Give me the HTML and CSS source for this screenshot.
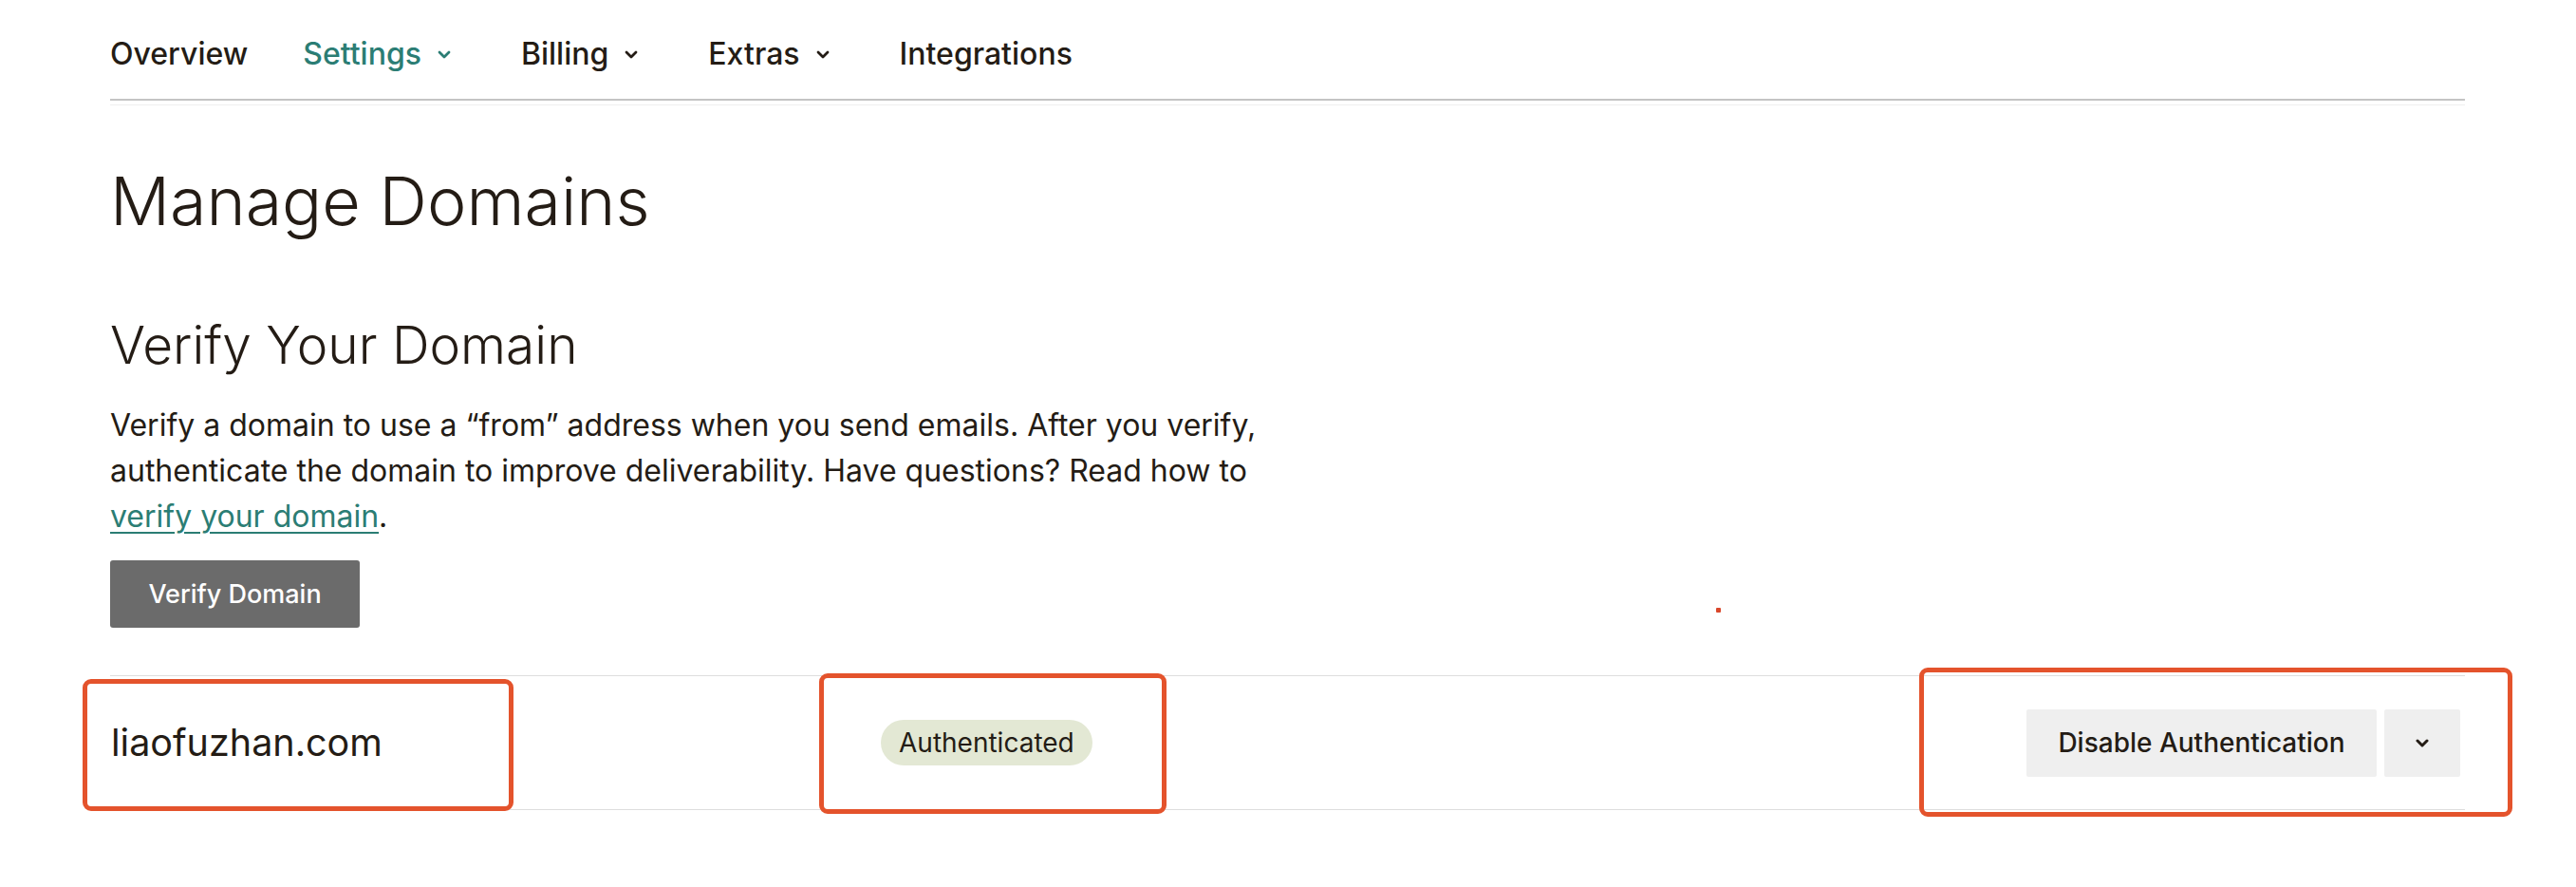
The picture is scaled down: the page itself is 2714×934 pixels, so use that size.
FILE: index.html
```html
<!DOCTYPE html>
<html lang="en">
<head>
<meta charset="utf-8">
<title>Manage Domains</title>
<link rel="stylesheet" href="styles.css">
</head>
<body>
<div class="page">
  <nav class="nav">
    <a class="nav-item">Overview</a>
    <a class="nav-item active">Settings<svg class="chev" viewBox="0 0 14 9" width="14" height="9"><path d="M2 2 L7 7 L12 2" fill="none" stroke="currentColor" stroke-width="2.8" stroke-linecap="round" stroke-linejoin="round"/></svg></a>
    <a class="nav-item">Billing<svg class="chev" viewBox="0 0 14 9" width="14" height="9"><path d="M2 2 L7 7 L12 2" fill="none" stroke="currentColor" stroke-width="2.8" stroke-linecap="round" stroke-linejoin="round"/></svg></a>
    <a class="nav-item">Extras<svg class="chev" viewBox="0 0 14 9" width="14" height="9"><path d="M2 2 L7 7 L12 2" fill="none" stroke="currentColor" stroke-width="2.8" stroke-linecap="round" stroke-linejoin="round"/></svg></a>
    <a class="nav-item">Integrations</a>
  </nav>
  <div class="nav-soft"></div>

  <h1 class="title">Manage Domains</h1>
  <h2 class="subtitle">Verify Your Domain</h2>
  <p class="intro">Verify a domain to use a “from” address when you send emails. After you verify, authenticate the domain to improve deliverability. Have questions? Read how to <a class="link">verify your domain</a>.</p>
  <button class="btn-primary">Verify Domain</button>

  <div class="domain-row">
    <div class="cell-domain">liaofuzhan.com</div>
    <div class="cell-status"><span class="badge">Authenticated</span></div>
    <div class="cell-actions">
      <button class="btn-secondary">Disable Authentication</button>
      <button class="btn-secondary btn-chev"><svg viewBox="0 0 14 9" width="14" height="9"><path d="M2 2 L7 7 L12 2" fill="none" stroke="currentColor" stroke-width="3" stroke-linecap="round" stroke-linejoin="round"/></svg></button>
    </div>
    <span class="mark mark-domain"></span>
    <span class="mark mark-status"></span>
    <span class="mark mark-actions"></span>
    <span class="dot"></span>
  </div>
</div>
</body>
</html>
```

FILE: styles.css
```css
html, body {
  margin: 0;
  padding: 0;
  background: #ffffff;
}

body {
  font-family: "Inter", "Liberation Sans", sans-serif;
  color: #241c15;
  min-height: 934px;
}

.page {
  margin-left: 116px;
  width: 2481px;
  padding-bottom: 60px;
}

.nav {
  display: flex;
  align-items: center;
  padding-top: 38px;
  padding-bottom: 28px;
  border-bottom: 2px solid #c4c4c4;
}

.nav-item {
  display: flex;
  align-items: center;
  font-size: 32px;
  line-height: 38px;
  font-weight: 500;
  color: #241c15;
  margin-right: 58px;
}

.nav-item.active {
  color: #2b7d74;
}

.chev {
  margin-left: 17px;
  margin-right: 16px;
}

.nav-soft {
  height: 1px;
  margin-top: 4px;
  background: #efefef;
}

.title {
  margin: 59px 0 0 0;
  font-size: 70px;
  line-height: 84px;
  font-weight: 300;
}

.subtitle {
  margin: 75px 0 0 0;
  font-size: 55px;
  line-height: 68px;
  font-weight: 300;
}

.intro {
  margin: 27px 0 0 0;
  width: 1240px;
  font-size: 32px;
  line-height: 48px;
  font-weight: 400;
}

.link {
  color: #2b7d74;
  text-decoration: underline;
  text-underline-offset: 5px;
  text-decoration-thickness: 2px;
}

.btn-primary {
  display: block;
  margin-top: 22px;
  height: 71px;
  width: 263px;
  border: none;
  border-radius: 3px;
  background: #6b6b6b;
  color: #ffffff;
  font-family: inherit;
  font-size: 27px;
  font-weight: 500;
  padding: 0;
}

.domain-row {
  position: relative;
  display: flex;
  align-items: center;
  margin-top: 50px;
  height: 140px;
  border-top: 1px solid #dedede;
  border-bottom: 1px solid #dedede;
  padding-right: 5px;
}

.cell-domain {
  width: 812px;
  font-size: 39.5px;
  font-weight: 400;
  padding-left: 1px;
  box-sizing: border-box;
}

.badge {
  display: inline-flex;
  align-items: center;
  height: 48px;
  padding: 0 19px;
  border-radius: 24px;
  background: #e3e8d4;
  font-size: 28px;
  color: #241c15;
}

.cell-actions {
  margin-left: auto;
  display: flex;
  gap: 8px;
}

.btn-secondary {
  height: 71px;
  border: none;
  border-radius: 2px;
  background: #efefef;
  color: #241c15;
  font-family: inherit;
  font-size: 28px;
  font-weight: 500;
  width: 369px;
  padding: 0;
}

.btn-chev {
  width: 80px;
  display: flex;
  align-items: center;
  justify-content: center;
}

.mark {
  position: absolute;
  border: 5px solid #e4532c;
  border-radius: 9px;
  box-sizing: border-box;
}

.mark-domain {
  left: -29px;
  top: 3px;
  width: 454px;
  height: 139px;
}

.mark-status {
  left: 747px;
  top: -3px;
  width: 366px;
  height: 148px;
}

.mark-actions {
  left: 1906px;
  top: -9px;
  width: 625px;
  height: 157px;
}

.dot {
  position: absolute;
  left: 1692px;
  top: -72px;
  width: 5px;
  height: 5px;
  border-radius: 1px;
  background: #d9472b;
}
```
